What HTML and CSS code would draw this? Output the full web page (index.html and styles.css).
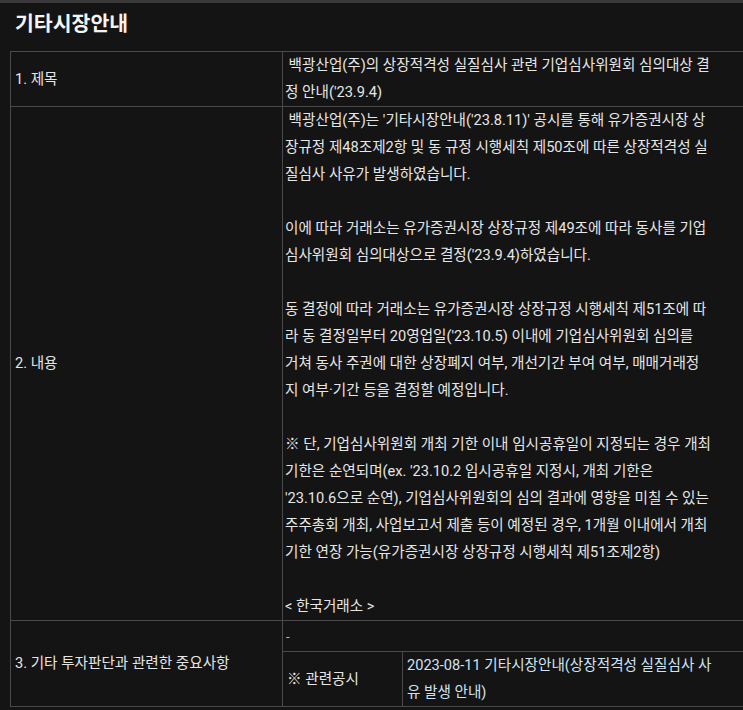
FILE: index.html
```html
<!DOCTYPE html>
<html lang="ko">

<head>
    <meta charset="UTF-8">
    <meta name="viewport" content="width=device-width, initial-scale=1.0">
    <title>기타시장안내</title>
    <link rel="stylesheet" href="styles.css">
</head>

<body>
    <h1 class="title">기타시장안내</h1>

    <table class="notice">
        <tr>
            <th>1. 제목</th>
            <td>&nbsp;백광산업(주)의 상장적격성 실질심사 관련 기업심사위원회 심의대상 결<br>정 안내('23.9.4)</td>
        </tr>
        <tr>
            <th>2. 내용</th>
            <td>&nbsp;백광산업(주)는 '기타시장안내('23.8.11)' 공시를 통해 유가증권시장 상<br>
                장규정 제48조제2항 및 동 규정 시행세칙 제50조에 따른 상장적격성 실<br>
                질심사 사유가 발생하였습니다.<br>
                <br>
                이에 따라 거래소는 유가증권시장 상장규정 제49조에 따라 동사를 기업<br>
                심사위원회 심의대상으로 결정('23.9.4)하였습니다.<br>
                <br>
                동 결정에 따라 거래소는 유가증권시장 상장규정 시행세칙 제51조에 따<br>
                라 동 결정일부터 20영업일('23.10.5) 이내에 기업심사위원회 심의를<br>
                거쳐 동사 주권에 대한 상장폐지 여부, 개선기간 부여 여부, 매매거래정<br>
                지 여부·기간 등을 결정할 예정입니다.<br>
                <br>
                ※ 단, 기업심사위원회 개최 기한 이내 임시공휴일이 지정되는 경우 개최<br>
                기한은 순연되며(ex. '23.10.2 임시공휴일 지정시, 개최 기한은<br>
                '23.10.6으로 순연), 기업심사위원회의 심의 결과에 영향을 미칠 수 있는<br>
                주주총회 개최, 사업보고서 제출 등이 예정된 경우, 1개월 이내에서 개최<br>
                기한 연장 가능(유가증권시장 상장규정 시행세칙 제51조제2항)<br>
                <br>
                &lt; 한국거래소 &gt;</td>
        </tr>
        <tr>
            <th>3. 기타 투자판단과 관련한 중요사항</th>
            <td class="nested-cell">
                <table class="related">
                    <tr>
                        <td colspan="2" class="dash">-</td>
                    </tr>
                    <tr>
                        <td class="label">※ 관련공시</td>
                        <td class="link">2023-08-11 기타시장안내(상장적격성 실질심사 사<br>유 발생 안내)</td>
                    </tr>
                </table>
            </td>
        </tr>
    </table>
</body>

</html>
```

FILE: styles.css
```css
* {
    font-family: Roboto, 'Noto Sans CJK KR', sans-serif;
}

body {
    margin: 0;
    background: #141414;
    color: #e6e6e6;
    border-top: 3px solid #3a3a3a;
    overflow: hidden;
    height: 707px;
}

.title {
    margin: 0;
    padding: 8px 15px 14px;
    font-size: 20.5px;
    font-weight: 700;
    line-height: 26px;
    color: #f4f4f4;
}

.notice {
    margin-left: 10px;
    width: 737px;
    border-collapse: collapse;
    font-size: 14.6px;
    line-height: 27px;

    th,
    td {
        border: 1px solid #4a4a4a;
        padding: 0 2px;
        white-space: nowrap;
        vertical-align: top;
    }

    th {
        width: 265px;
        font-weight: 400;
        text-align: left;
        vertical-align: middle;
        padding-left: 4px;
    }
}

.notice td.nested-cell {
    padding: 0;
}

.related {
    width: 100%;
    border-collapse: collapse;

    td {
        border: 1px solid #4a4a4a;
        padding: 0 3px;
    }

    tr:first-child td {
        border-top: none;
    }

    tr td:first-child {
        border-left: none;
    }

    tr:last-child td {
        border-bottom: none;
    }

    .dash {
        height: 30px;
        font-size: 13px;
        vertical-align: middle;
        color: #bdbdbd;
    }

    .label {
        width: 112px;
        vertical-align: middle;
        padding-left: 4px;
    }

    .link {
        color: #cfe3f5;
        padding-left: 4px;
    }
}
```
